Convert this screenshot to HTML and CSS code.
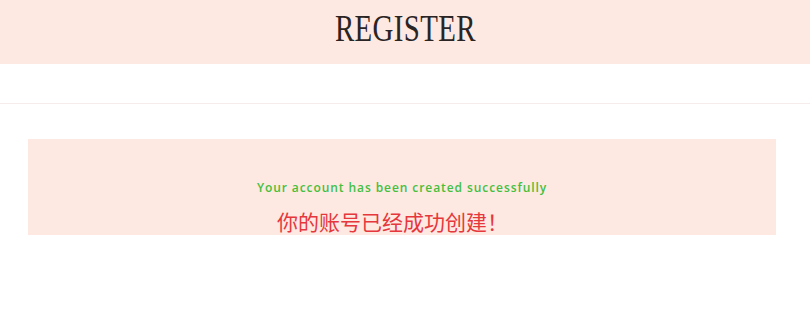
FILE: index.html
```html
<!DOCTYPE html>
<html lang="zh">
<head>
<meta charset="utf-8">
<title>Register</title>
<link rel="stylesheet" href="styles.css">
</head>
<body>
<header class="page-header">
  <h1 class="page-title"><span class="title-text">REGISTER</span></h1>
</header>
<div class="sub-bar"></div>
<main class="content">
  <section class="notice">
    <p class="notice-en">Your account has been created successfully</p>
    <p class="notice-zh">你的账号已经成功创建！</p>
  </section>
</main>
</body>
</html>
```

FILE: styles.css
```css
html, body {
  margin: 0;
  padding: 0;
  background: #ffffff;
}

.page-header {
  height: 64px;
  background: #fde9e2;
  display: flex;
  justify-content: center;
}

.page-title {
  margin: 0;
  padding-top: 9px;
  font-family: "Liberation Serif", serif;
  font-weight: normal;
  font-size: 37px;
  line-height: 40px;
  color: #2a2424;
}

.title-text {
  display: inline-block;
  transform: scaleX(0.78);
  letter-spacing: 0.5px;
}

.sub-bar {
  height: 39px;
  border-bottom: 1px solid #f6ecec;
}

.content {
  padding: 35px 34px 0 28px;
}

.notice {
  background: #fde9e2;
  height: 96px;
  display: flex;
  flex-direction: column;
  align-items: center;
  overflow: hidden;
}

.notice-en {
  margin: 41px 0 0 0;
  font-family: "Open Sans", "Noto Sans", sans-serif;
  font-weight: 600;
  font-size: 12px;
  line-height: 16px;
  letter-spacing: 0.92px;
  color: #45bf3e;
}

.notice-zh {
  margin: 11px 19px 0 0;
  font-family: "Noto Sans CJK SC", sans-serif;
  font-size: 21px;
  line-height: 28px;
  color: #e6373d;
}
```
